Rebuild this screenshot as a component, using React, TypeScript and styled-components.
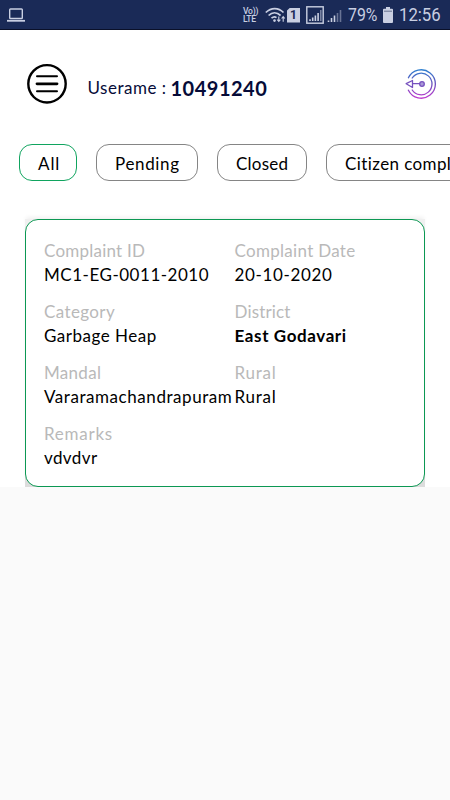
import React from 'react';
import styled, { createGlobalStyle } from 'styled-components';

const GlobalStyle = createGlobalStyle`
  * { box-sizing: border-box; }
  html, body { margin: 0; background: #fafafa; }
  body { font-family: Lato, sans-serif; font-size: 17px; color: #000; overflow: hidden; }
`;

const Screen = styled.main`
  width: 450px;
  height: 800px;
  background: #fafafa;
  overflow: hidden;
`;

const StatusBar = styled.header`
  display: flex;
  align-items: center;
  height: 30px;
  padding: 1px 9px 0 7px;
  background: #1a2a57;
  border-bottom: 1px solid #0a1029;
  color: #c9cfe2;
  font-family: Roboto, sans-serif;
`;

const StatusIcons = styled.div`
  display: flex;
  align-items: center;
  margin-left: auto;
`;

const StatusText = styled.span<{ $width: number; $scale: number }>`
  display: block;
  width: ${(p) => p.$width}px;
  font-size: 18px;
  line-height: 26px;
  white-space: nowrap;
  transform: scaleX(${(p) => p.$scale});
  transform-origin: left center;
`;

const Volte = styled.div`
  display: grid;
  grid-auto-rows: 8px;
  width: 22px;
  font-size: 8.5px;
  font-weight: 500;
  line-height: 8px;
  letter-spacing: -0.2px;
`;

const Content = styled.div`
  height: 457px;
  background: #fff;
`;

const TitleBar = styled.div`
  display: flex;
  align-items: center;
  height: 107px;
  padding: 0 13px 0 26px;
  color: #060b38;
`;

const MenuButton = styled.button`
  display: flex;
  width: 42px;
  height: 42px;
  padding: 0;
  border: 0;
  background: none;
`;

const UserLabel = styled.span`
  margin: 9px 0 0 19.5px;
  width: 83px;
  line-height: 24px;
  letter-spacing: 0.5px;
  white-space: nowrap;
`;

const UserId = styled.strong`
  margin-top: 9px;
  font-size: 20px;
  line-height: 24px;
  letter-spacing: 0.5px;
`;

const Logout = styled.button`
  display: flex;
  margin-left: auto;
  padding: 0;
  border: 0;
  background: none;
`;

const Filters = styled.nav`
  display: flex;
  gap: 19px;
  height: 52px;
  padding: 7px 0 8px 19px;
  overflow: hidden;
`;

const Chip = styled.button<{ $width: number; $active?: boolean; $track: number }>`
  flex: none;
  width: ${(p) => p.$width}px;
  height: 37px;
  padding: 2px 0 0 18px;
  border: 1px solid ${(p) => (p.$active ? '#10a45f' : '#858585')};
  border-radius: 13px;
  background: #fff;
  color: #000;
  font: 400 17px/24px Lato, sans-serif;
  letter-spacing: ${(p) => p.$track}px;
  text-align: left;
  white-space: nowrap;
`;

const CardFrame = styled.section`
  height: 268px;
  margin: 30px 25px 0;
  background: linear-gradient(#f0f0f0, #dcdcdc);
  box-shadow: 0 -3px 4px -1px rgba(0, 0, 0, 0.06);
`;

const Card = styled.div`
  display: grid;
  grid-template-columns: 190.5px 1fr;
  grid-auto-rows: 48px;
  row-gap: 13px;
  height: 268px;
  padding: 19px 17px 0 18px;
  border: 1px solid #0c9853;
  border-radius: 13px;
  background: #fff;
`;

const Field = styled.div`
  white-space: nowrap;
  line-height: 24px;
`;

const Label = styled.div<{ $track: number }>`
  color: #b9b9b9;
  letter-spacing: ${(p) => p.$track}px;
`;

const Value = styled.div<{ $track: number; $bold?: boolean }>`
  font-weight: ${(p) => (p.$bold ? 700 : 400)};
  letter-spacing: ${(p) => p.$track}px;
`;

const Spacer = styled.span<{ $size: number }>`
  width: ${(p) => p.$size}px;
`;

const SimIcon = styled.div`
  display: flex;
  align-items: center;
  justify-content: center;
  width: 13px;
  height: 15px;
  margin-right: 6px;
  background: #c9cfe2;
  clip-path: polygon(25% 0, 100% 0, 100% 100%, 0 100%, 0 20%);
  color: #1a2a57;
  font-size: 12px;
  font-weight: 700;
  line-height: 15px;
`;

const BatterySlot = styled.svg`
  margin-right: 6px;
`;

const LaptopIcon = () => (
  <svg width="18" height="16" viewBox="0 0 18 16" fill="none" stroke="#c9cfe2">
    <rect x="2.700" y="2" width="12.600" height="9.5" rx="0.8" strokeWidth="1.4" />
    <path d="M0 13.8h18" strokeWidth="1.8" />
  </svg>
);

const WifiIcon = () => (
  <svg width="22" height="18" viewBox="0 0 22 18" fill="none" stroke="#c9cfe2" strokeWidth="1.7">
    <path d="M.8 6.5C6 1.2 13.5 1.2 18.5 6.5M3.6 9.5c3.5-3.4 8.3-3.4 12 0M6.5 12.2c1.800-1.5 3.400-1.700 5-.6" />
    <circle cx="9.5" cy="14.6" r="1.3" fill="#c9cfe2" stroke="none" />
    <path d="M13.800 10.5v5M12.200 13.600l1.6 1.8 1.6-1.8M18.2 15.800v-5M16.6 12.500l1.6-1.8 1.6 1.8" strokeWidth="1.1" />
  </svg>
);

const SignalIcons = () => (
  <svg width="36" height="18" viewBox="0 0 36 18" fill="none" stroke="#c9cfe2">
    <rect x="0.8" y="0.8" width="16.4" height="16.4" strokeWidth="1.4" />
    <path d="M4 15v-1.8M6.7 15v-3.5M9.4 15V9.5M12.1 15V7" strokeWidth="1.6" />
    <path d="M14.8 15V4" strokeWidth="1.4" opacity=".6" />
    <path d="M22.5 16v-1.5M25.5 16v-4M28.5 16v-6.5" strokeWidth="1.6" />
    <path d="M31.5 16V7M34.5 16V4" strokeWidth="1.6" opacity=".45" />
  </svg>
);

const MenuIcon = () => (
  <svg width="42" height="42" viewBox="0 0 42 42" fill="none" stroke="#000" strokeLinecap="round">
    <circle cx="21" cy="20.8" r="18.7" strokeWidth="2.4" />
    <path d="M11 13.2h20M11 28.2h20" strokeWidth="2" />
    <path d="M11 20.8h20" strokeWidth="2.8" />
  </svg>
);

const LogoutIcon = () => (
  <svg width="32" height="32" viewBox="0 0 32 32" fill="none" stroke="url(#ring)" strokeWidth="1.3" strokeLinecap="round">
    <defs>
      <linearGradient id="ring" gradientUnits="userSpaceOnUse" x1="16" y1="1" x2="16" y2="31">
        <stop offset="0" stopColor="#2d82d0" />
        <stop offset="0.5" stopColor="#6a50bd" />
        <stop offset="1" stopColor="#c43ad0" />
      </linearGradient>
    </defs>
    <path d="M3.4 9.8A14.2 14.2 0 1 1 3.4 22.2" />
    <path d="M7.2 10A10.8 10.8 0 1 1 7.2 22" />
    <path d="M14.8 15.7H7.5V12.5L1.2 15.7L7.5 19.5V15.7" stroke="#7650be" strokeLinejoin="round" />
    <circle cx="17" cy="16" r="2.3" fill="#a99ad8" stroke="#7650be" />
  </svg>
);

type FieldData = { label: string; value: string; lt: number; vt: number; bold?: boolean };

const fields: FieldData[] = [
  { label: 'Complaint ID', value: 'MC1-EG-0011-2010', lt: 0.23, vt: 0.52 },
  { label: 'Complaint Date', value: '20-10-2020', lt: 0.3, vt: 0.64 },
  { label: 'Category', value: 'Garbage Heap', lt: 0.38, vt: 0.5 },
  { label: 'District', value: 'East Godavari', lt: 0.15, vt: 0.6, bold: true },
  { label: 'Mandal', value: 'Vararamachandrapuram', lt: 0.3, vt: 0.56 },
  { label: 'Rural', value: 'Rural', lt: 0.75, vt: 0.75 },
  { label: 'Remarks', value: 'vdvdvr', lt: 0.75, vt: 0.4 },
];

export default function App() {
  return (
    <Screen>
      <GlobalStyle />
      <StatusBar>
        <LaptopIcon />
        <StatusIcons>
          <Volte>
            <span>Vo))</span>
            <span>LTE</span>
          </Volte>
          <WifiIcon />
          <SimIcon>1</SimIcon>
          <SignalIcons />
          <Spacer $size={6} />
          <StatusText $width={35} $scale={0.88}>79%</StatusText>
          <BatterySlot width="10" height="16" viewBox="0 0 10 16" fill="#c9cfe2">
            <path d="M3 0h4v1.8h2q1 0 1 1V15q0 1-1 1H1q-1 0-1-1V2.8q0-1 1-1h2z" />
            <path d="M1 4.2h8" stroke="#68718f" />
          </BatterySlot>
          <StatusText $width={42} $scale={0.93}>12:56</StatusText>
        </StatusIcons>
      </StatusBar>
      <Content>
        <TitleBar>
          <MenuButton aria-label="Menu"><MenuIcon /></MenuButton>
          <UserLabel>Userame :</UserLabel>
          <UserId>10491240</UserId>
          <Logout aria-label="Log out"><LogoutIcon /></Logout>
        </TitleBar>
        <Filters>
          <Chip $width={58} $track={0.9} $active>All</Chip>
          <Chip $width={102} $track={0.65}>Pending</Chip>
          <Chip $width={90} $track={0.25}>Closed</Chip>
          <Chip $width={180} $track={0.4}>Citizen complaints</Chip>
        </Filters>
        <CardFrame>
          <Card>
            {fields.map((f) => (
              <Field key={f.label}>
                <Label $track={f.lt}>{f.label}</Label>
                <Value $track={f.vt} $bold={f.bold}>{f.value}</Value>
              </Field>
            ))}
          </Card>
        </CardFrame>
      </Content>
    </Screen>
  );
}
